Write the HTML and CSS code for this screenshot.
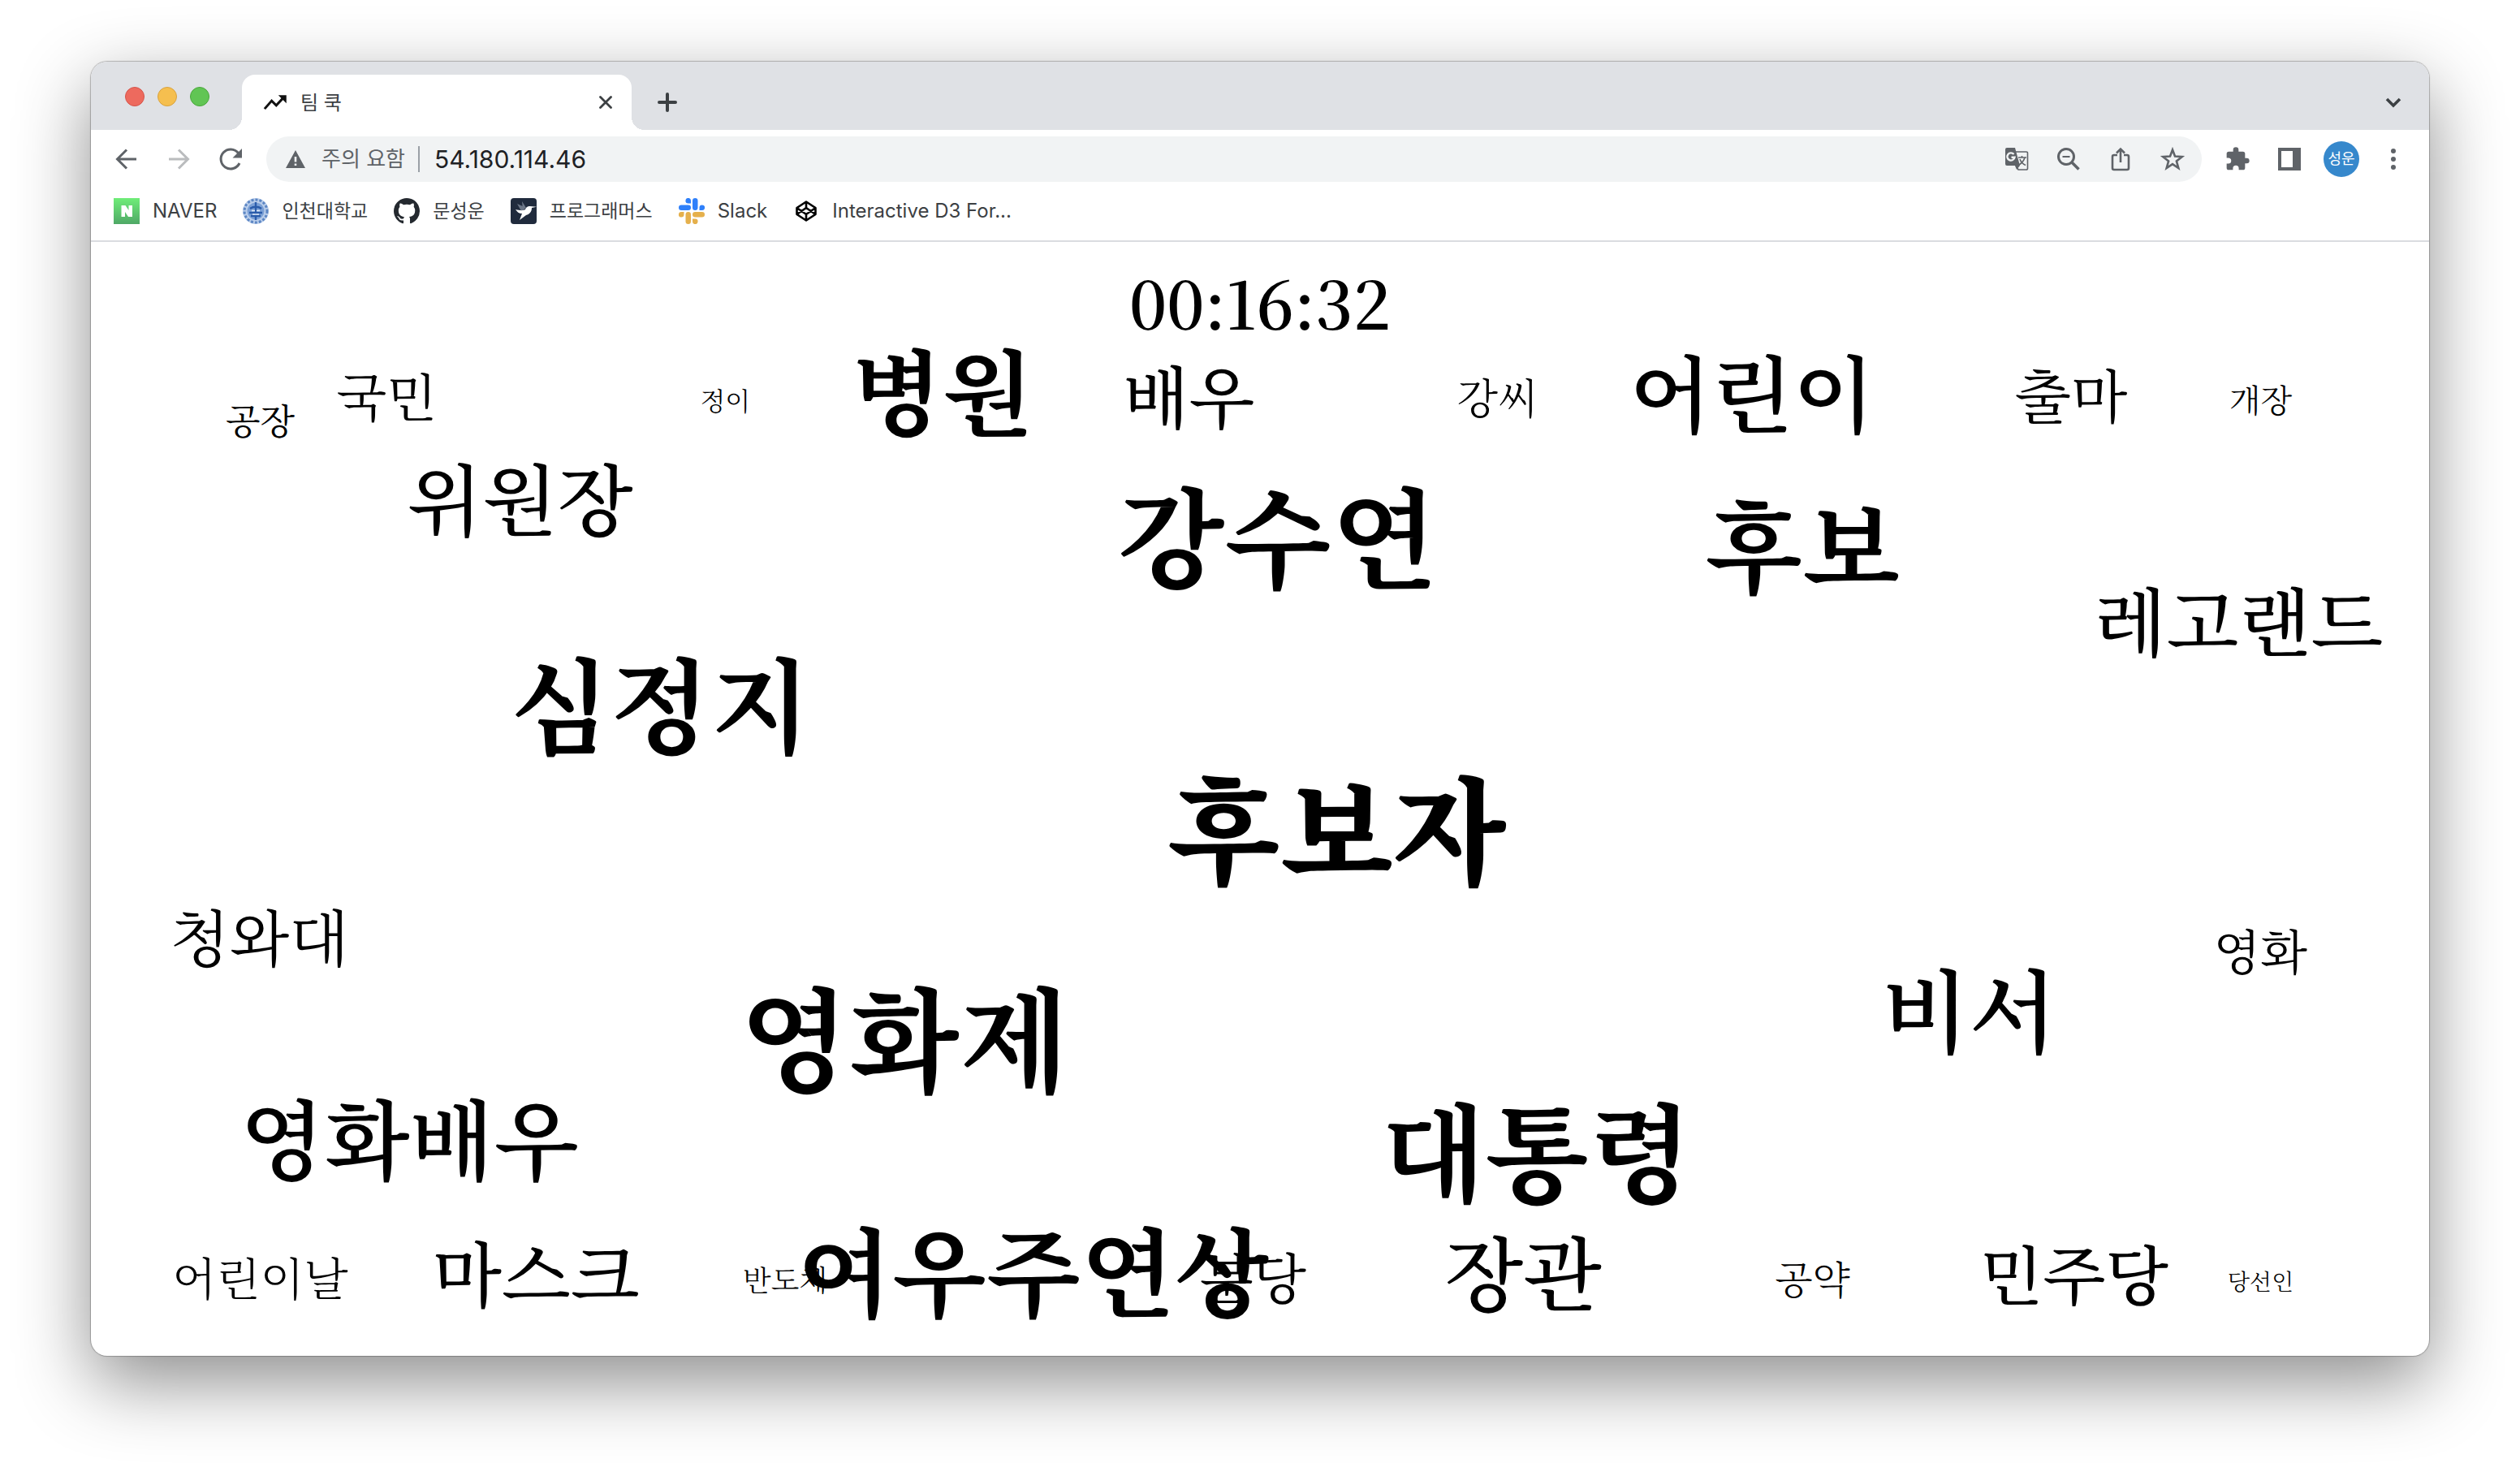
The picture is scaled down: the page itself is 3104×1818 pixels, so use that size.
FILE: index.html
```html
<!DOCTYPE html>
<html lang="ko">
<head>
<meta charset="utf-8">
<title>팀 쿡</title>
<link rel="stylesheet" href="styles.css">
</head>
<body>
<div class="window">
  <header class="tabstrip">
    <div class="lights">
      <button class="light light-close" aria-label="닫기"></button>
      <button class="light light-min" aria-label="최소화"></button>
      <button class="light light-max" aria-label="최대화"></button>
    </div>
    <div class="tab">
      <svg class="icon-md" viewBox="0 0 24 24" aria-hidden="true"><path d="M1.5 18.5 8.5 10.5 13 15 21 6.500" fill="none" stroke="#111" stroke-width="2.4"/><path d="M15 5h8v8z" fill="#111"/></svg>
      <span class="tab-title">팀 쿡</span>
      <button class="tab-close" aria-label="탭 닫기"><svg class="icon-xs" viewBox="0 0 16 16"><path d="M1.500 1.500l13 13M14.500 1.500l-13 13" stroke="#3c4043" stroke-width="2.800" stroke-linecap="round"/></svg></button>
    </div>
    <button class="new-tab" aria-label="새 탭"><svg class="icon-sm" viewBox="0 0 24 24"><path d="M12 2v20M2 12h20" stroke="#3c4043" stroke-width="4" stroke-linecap="round"/></svg></button>
    <button class="tab-search" aria-label="탭 검색"><svg class="icon-sm" viewBox="0 0 24 24"><path d="M4 8l8 8 8-8" fill="none" stroke="#3c4043" stroke-width="3.600"/></svg></button>
  </header>

  <nav class="toolbar">
    <button class="tool" aria-label="뒤로"><svg class="icon-lg" viewBox="0 0 32 32"><path d="M28 16H5M16 4.500 4.500 16 16 27.500" class="line"/></svg></button>
    <button class="tool tool-off" aria-label="앞으로"><svg class="icon-lg" viewBox="0 0 32 32"><path d="M4 16h23M16 4.500 27.500 16 16 27.500" class="line"/></svg></button>
    <button class="tool" aria-label="새로고침"><svg class="icon-lg" viewBox="0 0 32 32"><path d="M27 21A12 12 0 1 1 25.500 8.500" class="line"/><path d="M30 3v11.500H18.500z" fill="currentColor"/></svg></button>
    <div class="omnibox">
      <svg class="icon-sm" viewBox="0 0 24 24" aria-hidden="true"><path fill-rule="evenodd" d="M12 1 24 23H0zM10.700 9v6.500h2.600V9zm0 8.500V20h2.600v-2.500z" fill="#5f6368"/></svg>
      <span class="warn">주의 요함</span>
      <input class="url" type="text" value="54.180.114.46" aria-label="주소">
      <button class="tool" aria-label="번역"><svg class="icon-lg" viewBox="0 0 32 32"><path d="M14 7h14a1.500 1.500 0 0 1 1.500 1.500v19A1.500 1.500 0 0 1 28 29H18l-3-5" fill="none" stroke="currentColor" stroke-width="1.600"/><path d="M4 2h10l6 22-4 5-2-5H4a2 2 0 0 1-2-2V4a2 2 0 0 1 2-2z" fill="currentColor"/><path d="M12.500 10a4.600 4.600 0 1 0 1 3.800H9.500" fill="none" stroke="#f1f3f4" stroke-width="2.400"/><path d="M18 14h10M22.500 12v2M26 14c-1 4-4 7-7 9M20 16c1 3 4 6 7 7.500" fill="none" stroke="currentColor" stroke-width="1.600"/></svg></button>
      <button class="tool" aria-label="축소"><svg class="icon-lg" viewBox="0 0 32 32"><circle cx="13" cy="13" r="9.500" class="line"/><path d="M20 20l8.500 8.500" stroke="currentColor" stroke-width="3.600"/><path d="M8.500 13h9" stroke="currentColor" stroke-width="2"/></svg></button>
      <button class="tool" aria-label="공유"><svg class="icon-lg" viewBox="0 0 32 32"><path d="M12 11H8a2 2 0 0 0-2 2v14a2 2 0 0 0 2 2h16a2 2 0 0 0 2-2V13a2 2 0 0 0-2-2h-4" class="line thin"/><path d="M16 20V4M11 8.500l5-5 5 5" class="line thin"/></svg></button>
      <button class="tool" aria-label="북마크"><svg class="icon-lg" viewBox="0 0 32 32"><path d="M16 4.500l3 8 8.700.5-6.800 5.400 2.400 8.600-7.300-4.900L8.700 27l2.400-8.600L4.300 13l8.700-.5z" class="line thin"/></svg></button>
    </div>
    <button class="tool" aria-label="확장 프로그램"><svg class="icon-lg" viewBox="0 0 24 24"><path d="M20.500 11H19V7a2 2 0 0 0-2-2h-4V3.500a2.500 2.500 0 0 0-5 0V5H4a2 2 0 0 0-2 2v3.800h1.500a2.700 2.700 0 0 1 0 5.400H2V20a2 2 0 0 0 2 2h3.800v-1.500a2.700 2.700 0 0 1 5.400 0V22H17a2 2 0 0 0 2-2v-4h1.500a2.500 2.500 0 0 0 0-5z" fill="currentColor"/></svg></button>
    <button class="tool" aria-label="측면 패널"><svg class="icon-lg" viewBox="0 0 32 32"><path fill-rule="evenodd" d="M2 2h28v28H2zM6 6v20h14V6z" fill="currentColor"/></svg></button>
    <button class="tool" aria-label="프로필"><span class="avatar">성운</span></button>
    <button class="tool" aria-label="메뉴"><svg class="icon-lg" viewBox="0 0 32 32"><circle cx="16" cy="6" r="3" fill="currentColor"/><circle cx="16" cy="16" r="3" fill="currentColor"/><circle cx="16" cy="26" r="3" fill="currentColor"/></svg></button>
  </nav>

  <nav class="bookmarks">
    <a class="bookmark latin" href="#"><svg class="icon-lg" viewBox="0 0 32 32"><defs><linearGradient id="nv" x2="0" y2="1"><stop stop-color="#6fed78"/><stop offset="1" stop-color="#4fa866"/></linearGradient></defs><path d="M0 0h32v32H0z" fill="url(#nv)"/><path d="M9.500 9h5l4 6V9h4.500v14h-5l-4-6v6H9.500z" fill="#fff"/></svg>NAVER</a>
    <a class="bookmark" href="#"><svg class="icon-lg" viewBox="0 0 32 32"><circle cx="16" cy="16" r="16" fill="#b9cdea"/><circle cx="16" cy="16" r="14" fill="none" stroke="#5c86c4" stroke-width="3" stroke-dasharray="3 2"/><circle cx="16" cy="16" r="10.500" fill="#7ba0d6"/><path d="M16 5v22M9 13c4-3 10-3 14 0M8 18h16M10 22h12" stroke="#2a5cab" stroke-width="2.400" fill="none"/><path d="M11 15.500h4M17 15.500h4M12 20h8" stroke="#e4edf8" stroke-width="1.600"/></svg>인천대학교</a>
    <a class="bookmark" href="#"><svg class="icon-lg" viewBox="0 0 16 16"><path fill="#24292f" d="M8 0C3.580 0 0 3.580 0 8c0 3.540 2.290 6.530 5.470 7.590.4.070.55-.17.55-.38 0-.19-.01-.82-.01-1.490-2.010.37-2.530-.49-2.690-.94-.09-.23-.48-.94-.82-1.130-.28-.15-.68-.52-.01-.53.63-.01 1.080.58 1.230.82.72 1.210 1.870.87 2.330.66.07-.52.28-.87.51-1.070-1.780-.2-3.640-.89-3.640-3.950 0-.87.31-1.590.82-2.150-.08-.2-.36-1.020.08-2.120 0 0 .67-.21 2.200.82.64-.18 1.320-.27 2-.27s1.360.09 2 .27c1.530-1.040 2.200-.82 2.200-.82.44 1.100.16 1.920.08 2.120.51.56.82 1.270.82 2.150 0 3.070-1.870 3.750-3.650 3.950.29.25.54.73.54 1.480 0 1.070-.01 1.930-.01 2.200 0 .21.15.46.55.38A8.010 8.010 0 0 0 16 8c0-4.420-3.580-8-8-8z"/></svg>문성운</a>
    <a class="bookmark" href="#"><svg class="icon-lg" viewBox="0 0 32 32"><rect width="32" height="32" rx="4" fill="#202b3d"/><path d="M8 7l9 4-1 6-3-1zM14 4l5 8-4 3z" fill="#6c7686"/><path d="M6 14c5 1 9 2 12 0 1-3 3-4 6-4l8 .8-6 1.200c0 5-3 8-7 9l-8 6 3-8c-4 0-6-2-8-5z" fill="#fff"/></svg>프로그래머스</a>
    <a class="bookmark latin" href="#"><svg class="icon-lg" viewBox="0 0 32 32"><g fill="#2f80fa"><path d="M15 6.500V3.300A3.300 3.300 0 1 0 11.700 6.500z"/><rect y="8.500" width="15" height="6.500" rx="3.250"/><rect x="17" width="6.500" height="15" rx="3.250"/><path d="M25.500 15h3.200a3.300 3.300 0 1 0-3.200-3.300z"/></g><g fill="#e5b04c"><path d="M6.500 17H3.300a3.300 3.300 0 1 0 3.200 3.300z"/><rect x="8.500" y="17" width="6.500" height="15" rx="3.250"/><rect x="17" y="17" width="15" height="6.500" rx="3.250"/><path d="M17 25.500v3.200a3.300 3.300 0 1 0 3.300-3.200z"/></g></svg>Slack</a>
    <a class="bookmark latin" href="#"><svg class="icon-lg" viewBox="0 0 32 32"><path d="M16 4.500 27.500 12v8L16 27.500 4.500 20v-8zM16 4.500V12M16 20v7.500M4.500 12 16 20l11.500-8M4.500 20 16 12l11.500 8" fill="none" stroke="#000" stroke-width="2.600" stroke-linejoin="round"/></svg>Interactive D3 For...</a>
  </nav>

  <main class="cloud">
    <time class="clock" lang="en">00:16:32</time>
    <span class="word w400" style="left:7.24%;top:16.13%;font-size:44px">공장</span>
    <span class="word w400" style="left:12.65%;top:13.94%;font-size:64px">국민</span>
    <span class="word w300" style="left:27.13%;top:14.26%;font-size:32px">정이</span>
    <span class="word w700" style="left:36.43%;top:13.72%;font-size:116px">병원</span>
    <span class="word w500" style="left:46.96%;top:14.06%;font-size:84px">배우</span>
    <span class="word w300" style="left:60.17%;top:14.16%;font-size:52px">강씨</span>
    <span class="word w600" style="left:71.05%;top:13.80%;font-size:104px">어린이</span>
    <span class="word w400" style="left:84.69%;top:13.94%;font-size:72px">출마</span>
    <span class="word w300" style="left:92.80%;top:14.30%;font-size:40px">개장</span>
    <span class="word w500" style="left:18.35%;top:23.36%;font-size:96px">위원장</span>
    <span class="word w700" style="left:50.76%;top:26.79%;font-size:136px">강수연</span>
    <span class="word w700" style="left:73.20%;top:27.52%;font-size:124px">후보</span>
    <span class="word w500" style="left:91.86%;top:34.16%;font-size:92px">레고랜드</span>
    <span class="word w700" style="left:24.34%;top:41.82%;font-size:128px">심정지</span>
    <span class="word w900" style="left:53.28%;top:53.07%;font-size:144px">후보자</span>
    <span class="word w400" style="left:7.21%;top:62.63%;font-size:76px">청와대</span>
    <span class="word w400" style="left:92.79%;top:63.80%;font-size:60px">영화</span>
    <span class="word w600" style="left:80.34%;top:69.27%;font-size:112px">비서</span>
    <span class="word w700" style="left:34.79%;top:71.85%;font-size:140px">영화제</span>
    <span class="word w600" style="left:13.62%;top:80.84%;font-size:108px">영화배우</span>
    <span class="word w700" style="left:61.84%;top:81.90%;font-size:132px">대통령</span>
    <span class="word w700" style="left:40.31%;top:92.63%;font-size:120px">여우주연상</span>
    <span class="word w400" style="left:49.70%;top:93.14%;font-size:68px">분당</span>
    <span class="word w300" style="left:7.24%;top:93.14%;font-size:56px">어린이날</span>
    <span class="word w500" style="left:19.04%;top:92.80%;font-size:88px">마스크</span>
    <span class="word w300" style="left:29.69%;top:93.28%;font-size:36px">반도체</span>
    <span class="word w500" style="left:61.25%;top:92.80%;font-size:100px">장관</span>
    <span class="word w300" style="left:73.63%;top:93.23%;font-size:48px">공약</span>
    <span class="word w500" style="left:84.82%;top:92.96%;font-size:80px">민주당</span>
    <span class="word w300" style="left:92.80%;top:93.38%;font-size:28px">당선인</span>
  </main>
</div>
</body>
</html>
```
FILE: styles.css
```css
* { box-sizing: border-box; }

body {
  margin: 0;
  min-height: 100vh;
  padding: 76px 112px 148px;
  display: flex;
  background: #fff;
  color: #3c4043;
  font-family: Inter, "Noto Sans CJK KR", sans-serif;
  font-size: 24px;
}

button {
  padding: 0;
  border: 0;
  background: none;
  color: inherit;
  font: inherit;
  display: flex;
  align-items: center;
  justify-content: center;
}

svg { display: block; flex: none; }
.icon-xs { width: 16px; height: 16px; }
.icon-sm { width: 24px; height: 24px; }
.icon-md { width: 30px; height: 30px; }
.icon-lg { width: 32px; height: 32px; }
.line { fill: none; stroke: currentColor; stroke-width: 3; }
.thin { stroke-width: 2.6; }

.window {
  flex: 1;
  display: flex;
  flex-direction: column;
  overflow: hidden;
  border-radius: 20px;
  background: #fff;
  box-shadow: 0 0 1px 1px rgba(0, 0, 0, .25), 0 32px 90px rgba(0, 0, 0, .45);
}

/* Tab strip */
.tabstrip {
  display: flex;
  align-items: center;
  height: 84px;
  padding: 0 18px 0 42px;
  background: #dfe1e5;
}
.lights { display: flex; gap: 16px; width: 144px; padding-top: 2px; }
.light { width: 24px; height: 24px; border-radius: 50%; }
.light-close { background: #ed6a5e; border: 1px solid #d5544a; }
.light-min { background: #f5bf4f; border: 1px solid #d9a23e; }
.light-max { background: #61c554; border: 1px solid #4aa73c; }

.tab {
  position: relative;
  align-self: flex-end;
  display: flex;
  align-items: center;
  gap: 16px;
  width: 480px;
  height: 68px;
  padding: 0 20px 0 26px;
  border-radius: 16px 16px 0 0;
  background: #fff;
}
.tab::before, .tab::after {
  content: "";
  position: absolute;
  bottom: 0;
  width: 16px;
  height: 16px;
}
.tab::before { right: 100%; background: radial-gradient(circle at 0 0, transparent 16px, #fff 16px); }
.tab::after { left: 100%; background: radial-gradient(circle at 100% 0, transparent 16px, #fff 16px); }
.tab-title { flex: 1; padding-bottom: 4px; font-size: 24px; }
.tab-close { width: 24px; height: 24px; }
.new-tab { width: 56px; height: 56px; margin: 16px 0 0 16px; }
.tab-search { width: 52px; height: 56px; margin: 16px 0 0 auto; }

/* Toolbar */
.toolbar {
  display: flex;
  align-items: center;
  gap: 8px;
  height: 72px;
  padding: 0 16px;
  color: #5f6368;
}
.tool { width: 56px; height: 56px; flex: none; }
.tool-off { color: #babcbe; }
.omnibox {
  flex: 1;
  display: flex;
  align-items: center;
  gap: 8px;
  height: 56px;
  margin: 0 8px;
  padding: 0 8px 0 24px;
  border-radius: 28px;
  background: #f1f3f4;
}
.warn {
  margin-left: 12px;
  padding-right: 16px;
  border-right: 2px solid #9aa0a6;
  font-size: 26px;
  line-height: 32px;
}
.url {
  flex: 1;
  min-width: 0;
  margin-left: 10px;
  padding: 0;
  border: 0;
  outline: 0;
  background: none;
  color: #202124;
  font: inherit;
  font-size: 30px;
}
.avatar {
  width: 44px;
  height: 44px;
  border-radius: 50%;
  background: #3688cc;
  color: #fff;
  font-size: 18px;
  line-height: 44px;
  text-align: center;
}

/* Bookmarks bar */
.bookmarks {
  display: flex;
  align-items: center;
  gap: 32px;
  height: 66px;
  padding: 0 28px 8px;
  border-bottom: 2px solid #dadce0;
}
.bookmark {
  display: flex;
  align-items: center;
  gap: 16px;
  color: #3c4043;
  font-size: 23px;
  line-height: 32px;
  text-decoration: none;
}
.latin { font-size: 24px; }

/* Word cloud */
.cloud {
  position: relative;
  flex: 1;
  padding-top: 28px;
  color: #000;
  font-family: "Noto Serif KR", "Noto Serif CJK KR", "Noto Sans CJK KR", serif;
  text-align: center;
}
.clock {
  display: block;
  font-size: 80px;
  font-weight: 600;
  font-feature-settings: "calt" 0, "ccmp" 0, "locl" 0;
  line-height: 92px;
}
.word {
  position: absolute;
  transform: translate(-50%, -57%);
  line-height: 1;
  white-space: nowrap;
}
.w300 { font-weight: 300; }
.w400 { font-weight: 400; }
.w500 { font-weight: 500; }
.w600 { font-weight: 600; }
.w700 { font-weight: 700; }
.w900 { font-weight: 900; }
```
